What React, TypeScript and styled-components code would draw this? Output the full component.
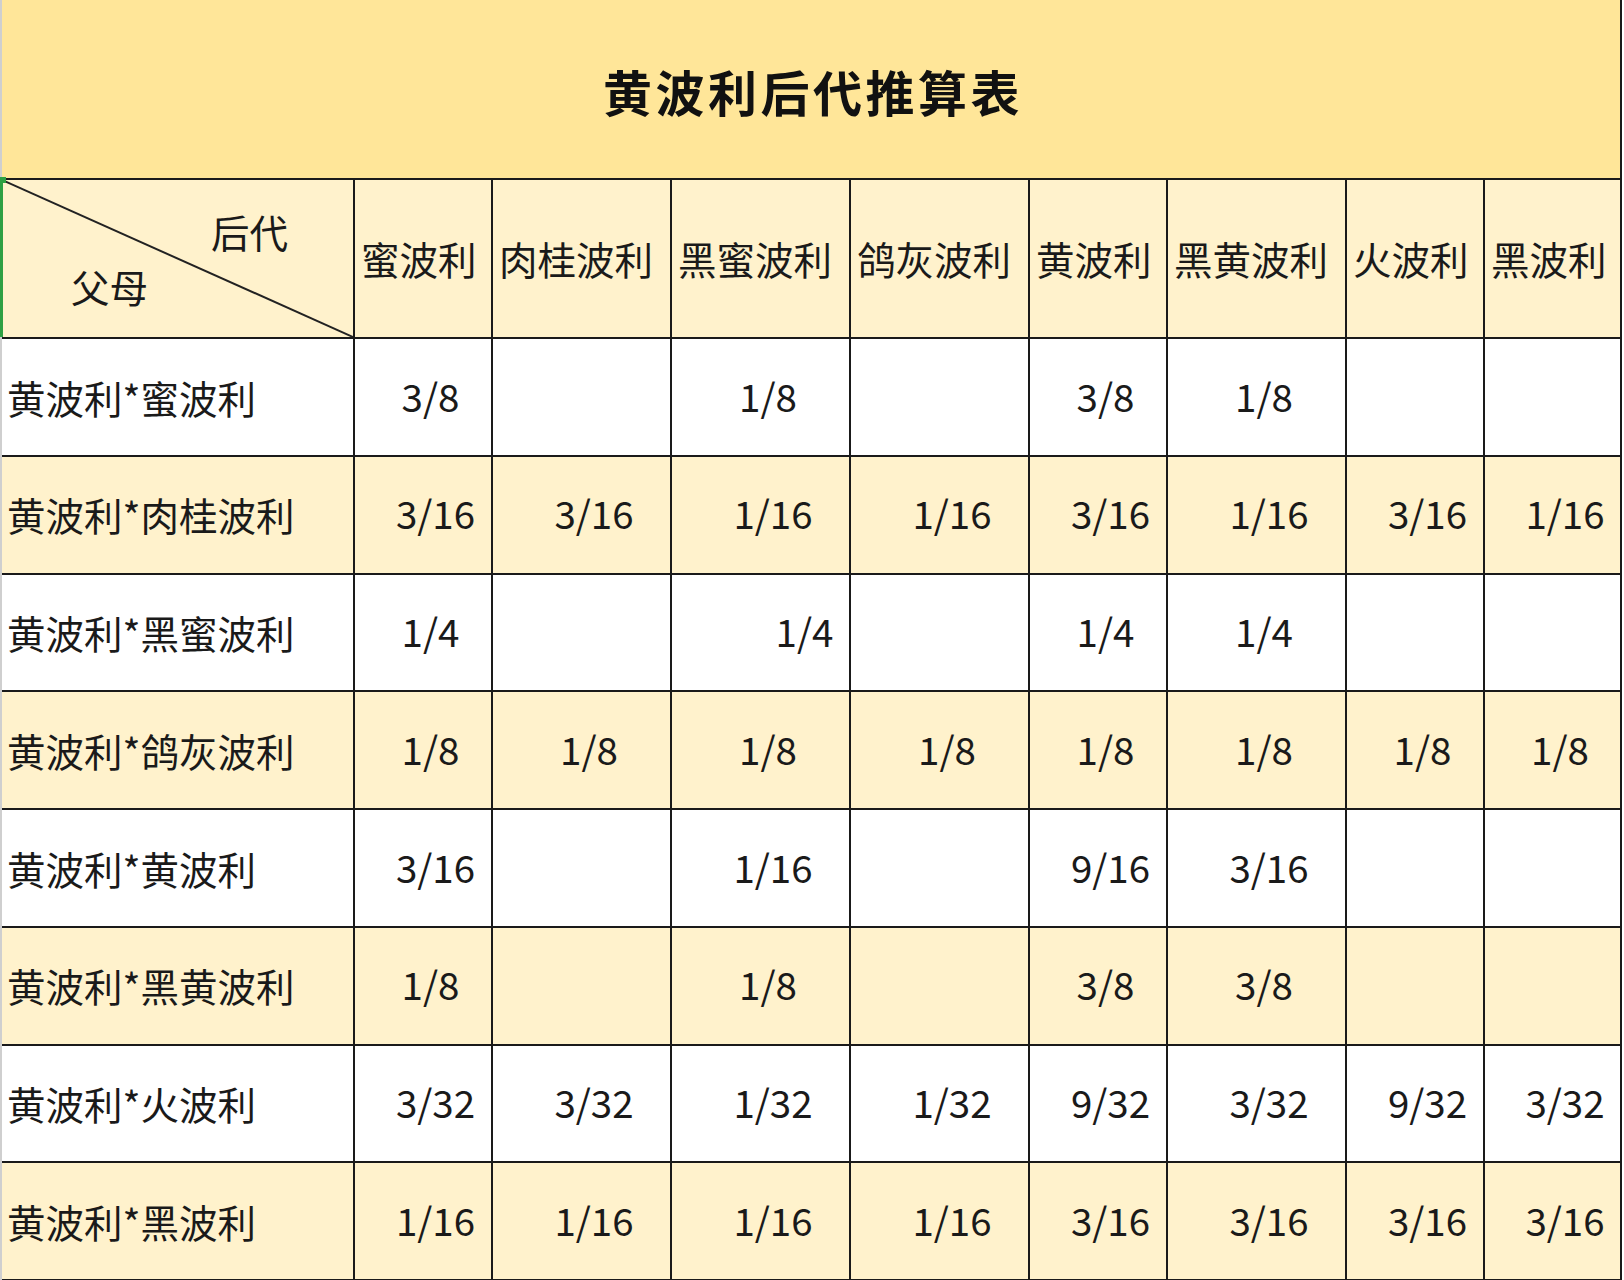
import React from "react";
import styled, { createGlobalStyle } from "styled-components";

const Global = createGlobalStyle`
  html, body {
    margin: 0;
    padding: 0;
    background: #ffffff;
    overflow: hidden;
  }
  body {
    font-family: "Noto Sans CJK SC", "Noto Sans", sans-serif;
    color: #1a1a1a;
  }
`;

const Sheet = styled.div`
  width: 1622px;
  display: grid;
  grid-template-columns: 353px 138px 179px 179px 179px 138px 179px 138px 137px;
  grid-template-rows: 180px 159px repeat(8, 117.75px);
  border-left: 2px solid #cfcfcf;
  box-sizing: border-box;
`;

const Title = styled.div`
  grid-column: 1 / -1;
  background: #ffe699;
  border-bottom: 2px solid #1a1a1a;
  border-right: 2px solid #1a1a1a;
  box-sizing: border-box;
  display: flex;
  align-items: center;
  justify-content: center;
  padding-top: 2px;
  padding-left: 4px;
  font-family: "Noto Sans CJK SC", sans-serif;
  font-weight: 700;
  font-size: 49px;
  letter-spacing: 3.5px;
  color: #111;
`;

const Cell = styled.div<{ $bg: string }>`
  background: ${(p) => p.$bg};
  border-right: 2px solid #1a1a1a;
  border-bottom: 2px solid #1a1a1a;
  box-sizing: border-box;
  display: flex;
  align-items: center;
  font-size: 38.5px;
  line-height: 1;
  white-space: nowrap;
  overflow: hidden;
`;

const DiagCell = styled(Cell)`
  position: relative;
  overflow: visible;
  flex-direction: column;
  align-items: flex-start;
  padding-top: 31px;
  &::before {
    content: "";
    position: absolute;
    left: -2px;
    top: 0;
    width: 3px;
    height: 100%;
    background: #2ea043;
  }
  &::after {
    content: "";
    position: absolute;
    left: -2px;
    top: -3px;
    width: 6px;
    height: 6px;
    background: #2ea043;
  }
`;

const DiagLine = styled.svg`
  position: absolute;
  inset: 0;
  width: 100%;
  height: 100%;
  pointer-events: none;
`;

const DiagLabel = styled.span<{ $left: number; $top: number }>`
  display: block;
  line-height: 40px;
  margin-left: ${(p) => p.$left}px;
  margin-top: ${(p) => p.$top}px;
`;

const HeadCell = styled(Cell)`
  padding-left: 6px;
`;

const RowLabel = styled(Cell)`
  padding-left: 5px;
`;

const ValueCell = styled(Cell)<{ $shift: number }>`
  justify-content: center;
  padding-left: ${(p) => p.$shift * 2}px;
  padding-bottom: 4px;
`;

const HEADER_BG = "#fff2cc";
const cols = ["蜜波利", "肉桂波利", "黑蜜波利", "鸽灰波利", "黄波利", "黑黄波利", "火波利", "黑波利"];

type Row = { label: string; values: string[]; shifts?: Record<number, number> };

const rows: Row[] = [
  { label: "黄波利*蜜波利", values: ["3/8", "", "1/8", "", "3/8", "1/8", "", ""] },
  { label: "黄波利*肉桂波利", values: ["3/16", "3/16", "1/16", "1/16", "3/16", "1/16", "3/16", "1/16"] },
  { label: "黄波利*黑蜜波利", values: ["1/4", "", "1/4", "", "1/4", "1/4", "", ""], shifts: { 2: 44 } },
  { label: "黄波利*鸽灰波利", values: ["1/8", "1/8", "1/8", "1/8", "1/8", "1/8", "1/8", "1/8"] },
  { label: "黄波利*黄波利", values: ["3/16", "", "1/16", "", "9/16", "3/16", "", ""] },
  { label: "黄波利*黑黄波利", values: ["1/8", "", "1/8", "", "3/8", "3/8", "", ""] },
  { label: "黄波利*火波利", values: ["3/32", "3/32", "1/32", "1/32", "9/32", "3/32", "9/32", "3/32"] },
  { label: "黄波利*黑波利", values: ["1/16", "1/16", "1/16", "1/16", "3/16", "3/16", "3/16", "3/16"] },
];

export default function App() {
  return (
    <>
      <Global />
      <Sheet>
        <Title>黄波利后代推算表</Title>
        <DiagCell $bg={HEADER_BG}>
          <DiagLine preserveAspectRatio="none">
            <line x1="0" y1="0" x2="100%" y2="100%" stroke="#222" strokeWidth="2" />
          </DiagLine>
          <DiagLabel $left={209} $top={0}>后代</DiagLabel>
          <DiagLabel $left={69} $top={15}>父母</DiagLabel>
        </DiagCell>
        {cols.map((c) => (
          <HeadCell key={c} $bg={HEADER_BG}>
            {c}
          </HeadCell>
        ))}
        {rows.map((r, i) => {
          const bg = i % 2 === 0 ? "#ffffff" : HEADER_BG;
          return (
            <React.Fragment key={r.label}>
              <RowLabel $bg={bg}>{r.label}</RowLabel>
              {r.values.map((v, j) => {
                const shift = r.shifts?.[j] ?? (v.length >= 4 ? 12.5 : 7.5);
                return (
                  <ValueCell key={j} $bg={bg} $shift={shift}>
                    {v}
                  </ValueCell>
                );
              })}
            </React.Fragment>
          );
        })}
      </Sheet>
    </>
  );
}
